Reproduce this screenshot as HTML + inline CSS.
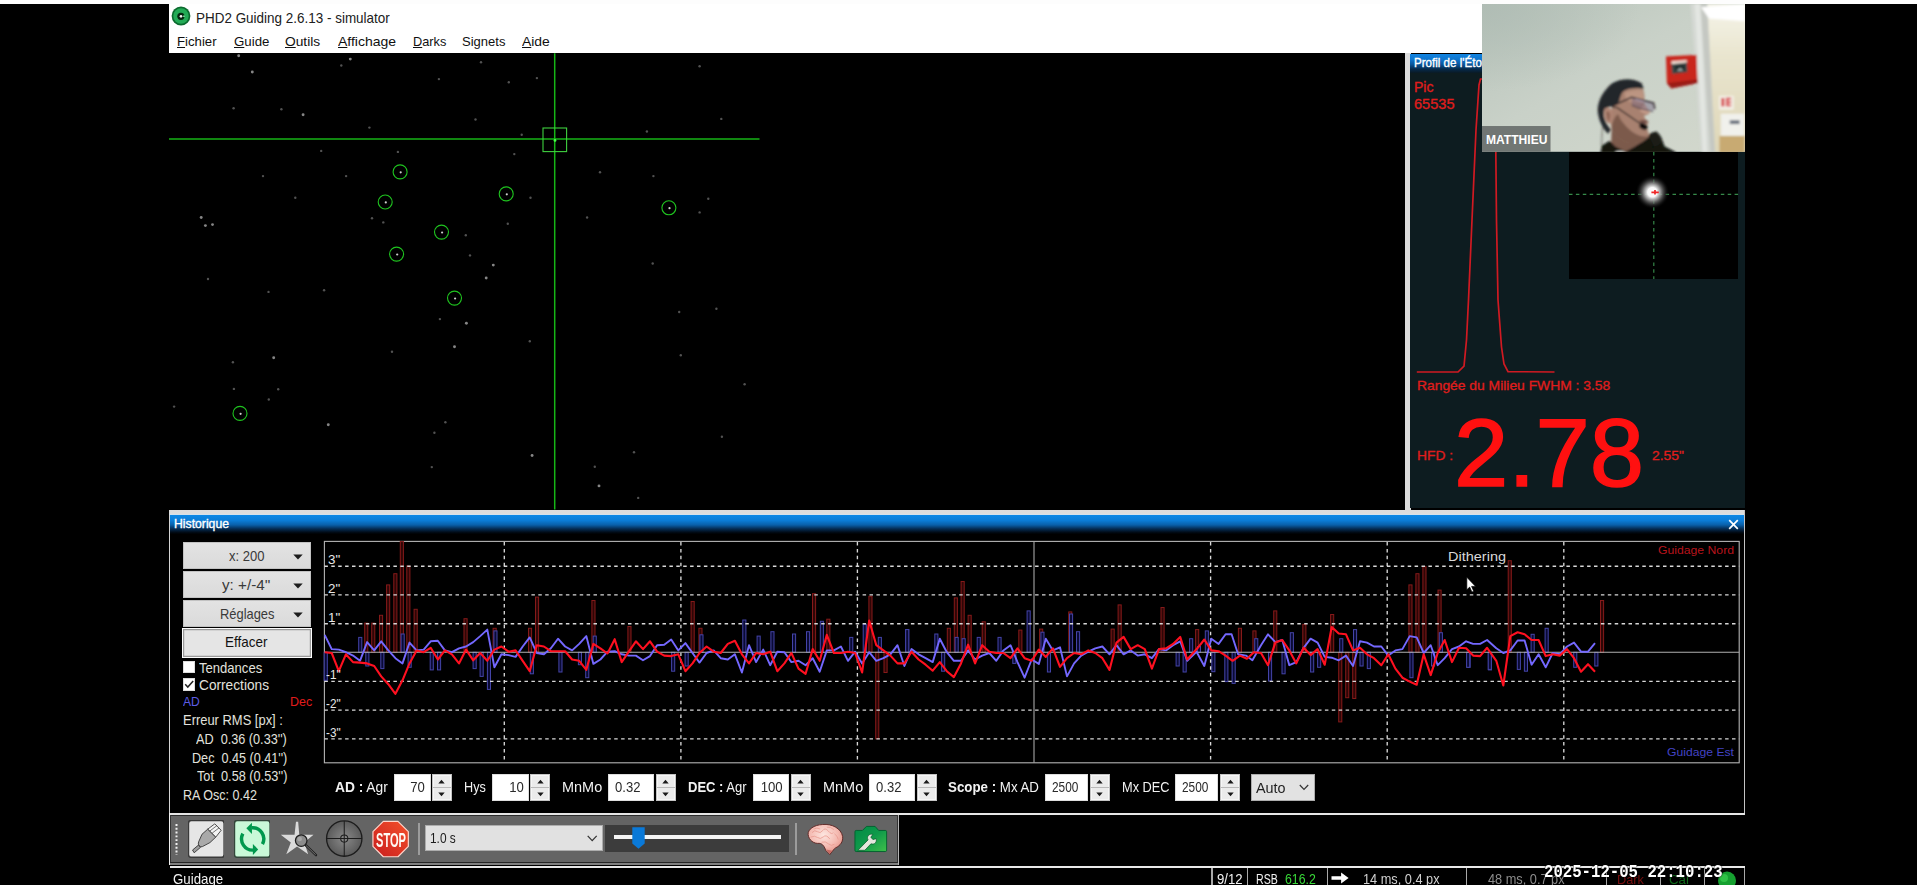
<!DOCTYPE html>
<html lang="fr"><head><meta charset="utf-8"><title>PHD2 Guiding 2.6.13 - simulator</title>
<style>
html,body{margin:0;padding:0;background:#000;}
html{width:1917px;height:885px;overflow:hidden;}
body{width:1917px;height:885px;position:relative;overflow:hidden;font-family:"Liberation Sans",sans-serif;}
body div,body svg{position:absolute;}
.t{position:absolute;white-space:pre;line-height:1;transform-origin:0 50%;display:block;}
</style></head>
<body>
<div style="left:0;top:0;width:1917px;height:885px;overflow:hidden;background:#000">
<!-- window title + menu -->
<div style="left:0.00px;top:0.00px;width:1917.00px;height:4.00px;background:#fdfdfd;"></div>
<div style="left:169.00px;top:3.60px;width:1576.00px;height:49.60px;background:#ffffff;"></div>
<svg style="left:170.5px;top:6.4px" width="20" height="20" viewBox="0 0 20 20"><circle cx="10" cy="10" r="9.4" fill="#0b6a2e"/><circle cx="10" cy="10" r="7.7" fill="#23ab56"/><circle cx="9.9" cy="10.3" r="3.6" fill="#04260f"/><circle cx="10" cy="10.3" r="1.35" fill="#f6f6f6"/><rect x="12" y="9.5" width="2" height="1.5" fill="#5fd088"/></svg>
<span class="t" style="left:196.00px;top:9.90px;font-size:15.00px;color:#202020;transform:scaleX(0.8975);">PHD2 Guiding 2.6.13 - simulator</span>
<span class="t" style="left:177.30px;top:34.89px;font-size:13.60px;color:#101010;transform:scaleX(0.9707);"><u>F</u>ichier</span>
<span class="t" style="left:233.80px;top:34.89px;font-size:13.60px;color:#101010;transform:scaleX(0.9757);"><u>G</u>uide</span>
<span class="t" style="left:285.40px;top:34.89px;font-size:13.60px;color:#101010;transform:scaleX(1.0125);"><u>O</u>utils</span>
<span class="t" style="left:337.50px;top:34.89px;font-size:13.60px;color:#101010;transform:scaleX(1.0292);"><u>A</u>ffichage</span>
<span class="t" style="left:412.50px;top:34.89px;font-size:13.60px;color:#101010;transform:scaleX(0.9376);"><u>D</u>arks</span>
<span class="t" style="left:462.40px;top:34.89px;font-size:13.60px;color:#101010;transform:scaleX(0.9571);">Signets</span>
<span class="t" style="left:522.00px;top:34.89px;font-size:13.60px;color:#101010;transform:scaleX(1.0214);"><u>A</u>ide</span>
<!-- guide camera star field -->
<div style="left:169.00px;top:53.20px;width:1235.50px;height:456.40px;background:#000;"></div>
<svg style="left:0;top:0" width="1917" height="885" viewBox="0 0 1917 885"><g fill="#9a9a9a"><circle cx="238.7" cy="55.8" r="1.45" fill="#a8a8a8" opacity=".8"/><circle cx="252.3" cy="72.0" r="1.45" fill="#a8a8a8" opacity=".8"/><circle cx="341.3" cy="65.5" r="1.2" fill="#6e6e6e" opacity=".75"/><circle cx="350.3" cy="59.1" r="1.45" fill="#a8a8a8" opacity=".8"/><circle cx="481.0" cy="62.3" r="1.2" fill="#6e6e6e" opacity=".75"/><circle cx="438.9" cy="79.1" r="1.2" fill="#6e6e6e" opacity=".75"/><circle cx="508.8" cy="82.3" r="1.2" fill="#6e6e6e" opacity=".75"/><circle cx="536.9" cy="78.1" r="1.2" fill="#6e6e6e" opacity=".75"/><circle cx="699.6" cy="66.2" r="1.2" fill="#6e6e6e" opacity=".75"/><circle cx="233.6" cy="108.2" r="1.2" fill="#6e6e6e" opacity=".75"/><circle cx="281.4" cy="109.2" r="1.2" fill="#6e6e6e" opacity=".75"/><circle cx="303.1" cy="114.7" r="1.45" fill="#a8a8a8" opacity=".8"/><circle cx="369.4" cy="127.6" r="1.2" fill="#6e6e6e" opacity=".75"/><circle cx="475.5" cy="119.5" r="1.2" fill="#6e6e6e" opacity=".75"/><circle cx="521.7" cy="134.7" r="1.2" fill="#6e6e6e" opacity=".75"/><circle cx="646.9" cy="131.5" r="1.2" fill="#6e6e6e" opacity=".75"/><circle cx="721.3" cy="118.9" r="1.2" fill="#6e6e6e" opacity=".75"/><circle cx="321.2" cy="150.9" r="1.2" fill="#6e6e6e" opacity=".75"/><circle cx="397.9" cy="151.9" r="1.2" fill="#6e6e6e" opacity=".75"/><circle cx="514.3" cy="154.1" r="1.2" fill="#6e6e6e" opacity=".75"/><circle cx="263.0" cy="176.1" r="1.2" fill="#6e6e6e" opacity=".75"/><circle cx="346.1" cy="176.1" r="1.2" fill="#6e6e6e" opacity=".75"/><circle cx="600.0" cy="172.3" r="1.2" fill="#6e6e6e" opacity=".75"/><circle cx="653.4" cy="176.1" r="1.2" fill="#6e6e6e" opacity=".75"/><circle cx="295.3" cy="197.8" r="1.2" fill="#6e6e6e" opacity=".75"/><circle cx="530.5" cy="197.8" r="1.2" fill="#6e6e6e" opacity=".75"/><circle cx="708.3" cy="198.8" r="1.2" fill="#6e6e6e" opacity=".75"/><circle cx="201.2" cy="217.5" r="1.45" fill="#a8a8a8" opacity=".8"/><circle cx="205.4" cy="225.6" r="1.45" fill="#a8a8a8" opacity=".8"/><circle cx="212.5" cy="224.6" r="1.45" fill="#a8a8a8" opacity=".8"/><circle cx="372.0" cy="218.2" r="1.2" fill="#6e6e6e" opacity=".75"/><circle cx="383.3" cy="222.4" r="1.2" fill="#6e6e6e" opacity=".75"/><circle cx="587.1" cy="217.5" r="1.2" fill="#6e6e6e" opacity=".75"/><circle cx="699.6" cy="212.4" r="1.2" fill="#6e6e6e" opacity=".75"/><circle cx="507.8" cy="223.7" r="1.2" fill="#6e6e6e" opacity=".75"/><circle cx="465.8" cy="235.3" r="1.2" fill="#6e6e6e" opacity=".75"/><circle cx="470.0" cy="255.4" r="1.2" fill="#6e6e6e" opacity=".75"/><circle cx="493.3" cy="265.1" r="1.45" fill="#a8a8a8" opacity=".8"/><circle cx="486.2" cy="278.0" r="1.45" fill="#a8a8a8" opacity=".8"/><circle cx="652.7" cy="263.5" r="1.2" fill="#6e6e6e" opacity=".75"/><circle cx="208.0" cy="279.0" r="1.2" fill="#6e6e6e" opacity=".75"/><circle cx="268.5" cy="291.9" r="1.2" fill="#6e6e6e" opacity=".75"/><circle cx="324.1" cy="290.3" r="1.2" fill="#6e6e6e" opacity=".75"/><circle cx="439.9" cy="319.1" r="1.2" fill="#6e6e6e" opacity=".75"/><circle cx="466.4" cy="323.3" r="1.45" fill="#a8a8a8" opacity=".8"/><circle cx="679.2" cy="312.0" r="1.2" fill="#6e6e6e" opacity=".75"/><circle cx="716.4" cy="308.7" r="1.2" fill="#6e6e6e" opacity=".75"/><circle cx="232.9" cy="362.3" r="1.2" fill="#6e6e6e" opacity=".75"/><circle cx="273.7" cy="357.8" r="1.45" fill="#a8a8a8" opacity=".8"/><circle cx="233.9" cy="388.9" r="1.2" fill="#6e6e6e" opacity=".75"/><circle cx="278.2" cy="389.2" r="1.2" fill="#6e6e6e" opacity=".75"/><circle cx="268.8" cy="399.5" r="1.2" fill="#6e6e6e" opacity=".75"/><circle cx="174.1" cy="406.6" r="1.2" fill="#6e6e6e" opacity=".75"/><circle cx="328.3" cy="424.8" r="1.45" fill="#a8a8a8" opacity=".8"/><circle cx="392.0" cy="351.7" r="1.2" fill="#6e6e6e" opacity=".75"/><circle cx="454.5" cy="346.8" r="1.45" fill="#a8a8a8" opacity=".8"/><circle cx="529.8" cy="341.3" r="1.2" fill="#6e6e6e" opacity=".75"/><circle cx="445.4" cy="422.2" r="1.2" fill="#6e6e6e" opacity=".75"/><circle cx="434.4" cy="432.8" r="1.2" fill="#6e6e6e" opacity=".75"/><circle cx="431.8" cy="467.1" r="1.2" fill="#6e6e6e" opacity=".75"/><circle cx="532.1" cy="455.5" r="1.45" fill="#a8a8a8" opacity=".8"/><circle cx="680.8" cy="355.2" r="1.2" fill="#6e6e6e" opacity=".75"/><circle cx="744.6" cy="384.3" r="1.2" fill="#6e6e6e" opacity=".75"/><circle cx="721.9" cy="436.7" r="1.2" fill="#6e6e6e" opacity=".75"/><circle cx="634.0" cy="452.3" r="1.2" fill="#6e6e6e" opacity=".75"/><circle cx="594.8" cy="466.8" r="1.2" fill="#6e6e6e" opacity=".75"/><circle cx="599.0" cy="485.9" r="1.45" fill="#a8a8a8" opacity=".8"/><circle cx="638.2" cy="497.9" r="1.2" fill="#6e6e6e" opacity=".75"/></g><g fill="none" stroke="#1fc41f" stroke-width="1.1"><circle cx="400.1" cy="171.9" r="7"/><circle cx="400.7" cy="172.3" r="1.1" fill="#cfcfcf" stroke="none"/><circle cx="385.2" cy="202.0" r="7"/><circle cx="385.8" cy="202.4" r="1.1" fill="#cfcfcf" stroke="none"/><circle cx="506.2" cy="193.9" r="7"/><circle cx="506.8" cy="194.3" r="1.1" fill="#cfcfcf" stroke="none"/><circle cx="441.5" cy="232.1" r="7"/><circle cx="442.1" cy="232.5" r="1.1" fill="#cfcfcf" stroke="none"/><circle cx="396.6" cy="254.1" r="7"/><circle cx="397.2" cy="254.5" r="1.1" fill="#cfcfcf" stroke="none"/><circle cx="454.5" cy="298.1" r="7"/><circle cx="455.1" cy="298.5" r="1.1" fill="#cfcfcf" stroke="none"/><circle cx="668.9" cy="207.8" r="7"/><circle cx="669.5" cy="208.2" r="1.1" fill="#cfcfcf" stroke="none"/><circle cx="240.0" cy="413.4" r="7"/><circle cx="240.6" cy="413.8" r="1.1" fill="#cfcfcf" stroke="none"/></g><g stroke="#16b516" stroke-width="1.5" fill="none"><line x1="554.7" y1="53.2" x2="554.7" y2="509.6"/><line x1="169" y1="139" x2="759.5" y2="139"/></g><rect x="543" y="128" width="23.6" height="23.6" fill="none" stroke="#3fd03f" stroke-width="1.1"/><circle cx="555" cy="140.4" r="1.4" fill="#48ff48"/></svg>
<div style="left:1404.50px;top:53.20px;width:6.00px;height:457.00px;background:#dcdcdc;"></div>
<div style="left:169.00px;top:509.60px;width:1576.20px;height:5.40px;background:linear-gradient(#dcdcdc 0,#dddddd 70%,#cfe3f2 100%);"></div>
<!-- star profile panel -->
<div style="left:1410.40px;top:53.70px;width:334.80px;height:454.70px;background:#0d1c20;"></div>
<div style="left:1410.40px;top:53.70px;width:334.80px;height:19.50px;background:linear-gradient(#1184e2 0,#0e74cc 30%,#0a559a 55%,#06294a 80%,#0a1a24 100%);"></div>
<span class="t" style="left:1414.20px;top:56.97px;font-size:12.20px;color:#ffffff;transform:scaleX(0.9495);-webkit-text-stroke:.35px #fff;">Profil de l&#39;Étoile</span>
<span class="t" style="left:1414.00px;top:79.98px;font-size:14.20px;color:#e01c1c;transform:scaleX(0.9889);-webkit-text-stroke:.3px #e01c1c;">Pic</span>
<span class="t" style="left:1414.00px;top:97.18px;font-size:14.20px;color:#e01c1c;transform:scaleX(1.0265);-webkit-text-stroke:.3px #e01c1c;">65535</span>
<svg style="left:0;top:0" width="1917" height="885" viewBox="0 0 1917 885"><polyline fill="none" stroke="#d01a22" stroke-width="1.7" points="1416.8,372 1458,372 1464,366 1466.5,340 1468.5,300 1472,220 1476,130 1479,85 1480.5,79 1494,79 1495.5,120 1496.5,220 1498,300 1501.5,347 1504,364 1508,371.6 1554.5,372"/></svg>
<span class="t" style="left:1416.60px;top:379.46px;font-size:13.40px;color:#e01c1c;transform:scaleX(1.0342);-webkit-text-stroke:.3px #e01c1c;">Rangée du Milieu FWHM : 3.58</span>
<span class="t" style="left:1416.60px;top:449.26px;font-size:13.40px;color:#e01c1c;transform:scaleX(1.0295);-webkit-text-stroke:.3px #e01c1c;">HFD :</span>
<span class="t" style="left:1453.50px;top:404.51px;font-size:96.50px;color:#ff1010;transform:scaleX(1.0116);-webkit-text-stroke:1.5px #ff1010;">2.78</span>
<span class="t" style="left:1652.40px;top:449.26px;font-size:13.40px;color:#e01c1c;transform:scaleX(1.0380);-webkit-text-stroke:.3px #e01c1c;">2.55&quot;</span>
<div style="left:1568.60px;top:151.60px;width:169.80px;height:127.00px;background:#000;"></div>
<svg style="left:1568.6px;top:151.6px" width="170" height="127" viewBox="0 0 170 127"><defs><radialGradient id="glow"><stop offset="0" stop-color="#fff"/><stop offset="0.28" stop-color="#f8f8f8"/><stop offset="0.5" stop-color="#9c9c9c" stop-opacity=".9"/><stop offset="0.75" stop-color="#444" stop-opacity=".55"/><stop offset="1" stop-color="#000" stop-opacity="0"/></radialGradient></defs><g stroke="#368a4a" stroke-width="1.15" stroke-dasharray="3.5 3.4"><line x1="0" y1="42.3" x2="170" y2="42.3"/><line x1="84.8" y1="0" x2="84.8" y2="127"/></g><circle cx="83.4" cy="40.2" r="17" fill="url(#glow)"/><path d="M82.4 40.3h7.4M86 38v4.6" stroke="#f02626" stroke-width="1.7"/></svg>
<!-- presenter webcam thumbnail -->
<svg style="left:1482.4px;top:3.8px" width="262.8" height="147.8" viewBox="15 22 1500 843" preserveAspectRatio="none"><defs><linearGradient id="wall" x1="0" y1="0" x2="1" y2="1"><stop offset="0" stop-color="#b7c3ba"/><stop offset="0.45" stop-color="#c9d1c8"/><stop offset="1" stop-color="#d3d8cd"/></linearGradient><linearGradient id="cream" x1="0" y1="0" x2="0" y2="1"><stop offset="0" stop-color="#f6f5ea"/><stop offset="0.35" stop-color="#e9e5cf"/><stop offset="1" stop-color="#dfd7b8"/></linearGradient><linearGradient id="skin" x1="0" y1="0" x2="1" y2="0"><stop offset="0" stop-color="#8e6c5c"/><stop offset="0.5" stop-color="#b18b77"/><stop offset="1" stop-color="#bf9a86"/></linearGradient><radialGradient id="tl" cx="0" cy="0" r="1"><stop offset="0" stop-color="#aebbb3" stop-opacity=".8"/><stop offset="1" stop-color="#aebbb3" stop-opacity="0"/></radialGradient><filter id="bl" x="-5%" y="-5%" width="110%" height="110%"><feGaussianBlur stdDeviation="6.5"/></filter><filter id="bl2" x="-5%" y="-5%" width="110%" height="110%"><feGaussianBlur stdDeviation="9"/></filter></defs><rect x="15" y="22" width="1500" height="843" fill="url(#wall)"/><rect x="15" y="22" width="900" height="500" fill="url(#tl)"/><g filter="url(#bl)"><rect x="1300" y="22" width="230" height="843" fill="url(#cream)"/><path d="M1205 22 L1300 22 L1345 865 L1265 865 Z" fill="#d4d8d3"/><path d="M1228 22 L1262 22 L1300 865 L1275 865 Z" fill="#e3e6e2"/><path d="M1262 22 L1300 22 L1345 865 L1318 865 Z" fill="#c5c8c2"/><path d="M1265 40 L1515 22 L1515 120 L1310 105 Z" fill="#ffffff"/><rect x="1370" y="775" width="145" height="95" fill="#c8aa72"/><rect x="1378" y="648" width="135" height="125" fill="#f1f1ec"/><rect x="1430" y="685" width="55" height="22" fill="#6d7480"/><rect x="1368" y="545" width="84" height="80" fill="#f3efe6"/><rect x="1382" y="558" width="14" height="48" fill="#d2202a"/><rect x="1408" y="556" width="28" height="50" fill="#d2202a" opacity=".8"/><rect x="1420" y="568" width="18" height="8" fill="#f3efe6"/><rect x="1420" y="588" width="18" height="8" fill="#f3efe6"/><g transform="translate(571.1 342.7) scale(0.613)"><path d="M806 -36L1090 -50 1100 212 856 262 814 214z" fill="#c9271f"/><path d="M814 214L1100 178 1100 212 856 262z" fill="#9a1a16"/><path d="M856 24L1000 14 1006 110 862 126z" fill="#3d4a49"/><path d="M886 52L980 44 984 100 890 108z" fill="#1f2a2a"/><path d="M900 100l40-30 30 26z" fill="#cfd8d8" opacity=".75"/><path d="M856 8L1000 -2 1000 22 856 38z" fill="#efd9cf"/><path d="M300 640L290 860 620 860 640 700z" fill="#7c5a4c"/><path d="M196 864L208 796 280 750 332 802 430 852 522 800 600 752 660 682 716 660 762 720 792 800 892 852 892 864z" fill="#12140f"/><path d="M640 700C680 660 730 650 760 720 780 770 740 800 690 800z" fill="#1b1d18"/><path d="M336 850C370 838 410 842 436 860L330 862z" fill="#d8d8d4"/><path d="M372 300C430 262 520 250 592 266 612 330 604 372 602 400 622 440 648 470 656 486 650 504 622 512 602 512 606 540 618 556 640 566 646 590 630 600 624 616 634 650 650 680 648 704 630 740 560 770 470 770 400 760 330 700 300 640 270 560 300 380 372 300z" fill="#a8816f"/><path d="M420 300C470 280 540 270 590 280 600 330 596 370 590 400 560 420 480 400 430 360z" fill="#c09a87" opacity=".8"/><path d="M300 640C330 700 400 760 470 770 560 770 630 740 648 704 600 720 520 700 460 640 420 600 380 560 360 500 330 520 300 580 300 640z" fill="#6f5043" opacity=".8"/><path d="M560 470C600 500 640 500 654 488 640 470 620 440 604 410z" fill="#c9a08e"/><path d="M560 560C590 552 620 556 640 568 630 584 600 588 566 580z" fill="#6e4a44"/><path d="M266 684C220 640 176 560 170 470 168 380 214 292 300 216 380 168 500 160 580 214L598 268C540 250 450 258 404 290 380 320 372 372 368 384 350 410 330 424 300 428 260 432 232 452 226 480 216 530 250 600 292 644z" fill="#24262a"/><path d="M232 452C260 430 300 440 306 480 312 540 300 580 280 590 250 590 214 520 232 452z" fill="#b08574"/><path d="M250 480C270 470 286 490 284 520 282 550 274 566 264 566z" fill="#8a6252"/><path d="M486 344L688 398 700 452 684 476 560 450 486 420z" fill="#6c5c7c" fill-opacity=".42"/><path d="M300 430L486 344 690 398 702 452" fill="none" stroke="#2e2628" stroke-width="13" stroke-linejoin="round"/><path d="M486 420L560 450 684 478" fill="none" stroke="#4a3c44" stroke-width="8"/><path d="M520 360L600 384" stroke="#c8c0e0" stroke-width="14" opacity=".55"/><path d="M300 436L350 440 584 602" fill="none" stroke="#1c1a1c" stroke-width="10"/><ellipse cx="596" cy="616" rx="40" ry="27" transform="rotate(28 596 616)" fill="#0c0c0d"/><path d="M216 620C206 680 210 740 206 796" fill="none" stroke="#3c3836" stroke-width="6"/></g></g><rect x="15" y="718" width="391" height="147" fill="#6d7270" fill-opacity=".96"/></svg>
<span class="t" style="left:1486.20px;top:133.20px;font-size:13.00px;color:#ffffff;font-weight:700;transform:scaleX(0.9274);">MATTHIEU</span>
<!-- history graph panel -->
<div style="left:169.00px;top:515.00px;width:1576.20px;height:299.90px;background:#000;"></div>
<div style="left:169.00px;top:515.00px;width:1576.20px;height:21.50px;background:linear-gradient(#0c88e6 0,#0b7cd6 25%,#0960aa 45%,#052f58 62%,#010c18 78%,#000 87%);"></div>
<div style="left:169.00px;top:515.00px;width:1.30px;height:299.90px;background:#d4d4d4;"></div>
<div style="left:1743.90px;top:509.60px;width:1.30px;height:305.30px;background:#c4c4c4;"></div>
<div style="left:169.00px;top:812.90px;width:1576.20px;height:2.00px;background:#e6e6e6;"></div>
<span class="t" style="left:173.80px;top:517.97px;font-size:12.20px;color:#ffffff;transform:scaleX(1.0023);-webkit-text-stroke:.35px #fff;">Historique</span>
<svg style="left:1727.5px;top:518.5px" width="11" height="11" viewBox="0 0 11 11"><path d="M1.2 1.2l8.6 8.6M9.8 1.2l-8.6 8.6" stroke="#fff" stroke-width="1.7"/></svg>
<div style="left:182.60px;top:542.40px;width:128.80px;height:26.60px;background:linear-gradient(#e3e3e3,#dadada);box-shadow:inset 0 0 0 1px #c2c2c2;"></div>
<span class="t" style="left:228.50px;top:548.98px;font-size:14.20px;color:#3a3a3a;transform:scaleX(0.9184);">x: 200</span>
<svg style="left:293px;top:554.1px" width="10" height="6" viewBox="0 0 10 6"><path d="M0.3 0.4h9.4L5 5.6z" fill="#1c1c1c"/></svg>
<div style="left:182.60px;top:571.20px;width:128.80px;height:26.60px;background:linear-gradient(#e3e3e3,#dadada);box-shadow:inset 0 0 0 1px #c2c2c2;"></div>
<span class="t" style="left:221.50px;top:577.78px;font-size:14.20px;color:#3a3a3a;transform:scaleX(1.0718);">y: +/-4&#39;&#39;</span>
<svg style="left:293px;top:582.9px" width="10" height="6" viewBox="0 0 10 6"><path d="M0.3 0.4h9.4L5 5.6z" fill="#1c1c1c"/></svg>
<div style="left:182.60px;top:600.00px;width:128.80px;height:26.60px;background:linear-gradient(#e3e3e3,#dadada);box-shadow:inset 0 0 0 1px #c2c2c2;"></div>
<span class="t" style="left:220.00px;top:606.58px;font-size:14.20px;color:#3a3a3a;transform:scaleX(0.9090);">Réglages</span>
<svg style="left:293px;top:611.7px" width="10" height="6" viewBox="0 0 10 6"><path d="M0.3 0.4h9.4L5 5.6z" fill="#1c1c1c"/></svg>
<div style="left:181.60px;top:627.60px;width:130.60px;height:30.20px;background:#e5e5e5;box-shadow:inset 0 0 0 1px #fdfdfd, inset 0 0 0 2.2px #9a9a9a;"></div>
<span class="t" style="left:225.40px;top:635.24px;font-size:14.60px;color:#111;transform:scaleX(0.9221);">Effacer</span>
<div style="left:182.60px;top:660.80px;width:12.40px;height:12.40px;background:#fff;box-shadow:inset 0 0 0 1px #dcdcdc;"></div>
<div style="left:182.60px;top:678.20px;width:12.40px;height:12.40px;background:#fff;box-shadow:inset 0 0 0 1px #dcdcdc;"></div>
<svg style="left:182.6px;top:678.2px" width="12.4" height="12.4" viewBox="0 0 12.4 12.4"><path d="M2.2 6.3l2.6 2.8 5.4-6.2" fill="none" stroke="#222" stroke-width="1.5"/></svg>
<span class="t" style="left:199.40px;top:660.58px;font-size:14.20px;color:#e2e2de;transform:scaleX(0.9209);">Tendances</span>
<span class="t" style="left:199.40px;top:678.18px;font-size:14.20px;color:#e2e2de;transform:scaleX(0.9649);">Corrections</span>
<span class="t" style="left:182.60px;top:695.09px;font-size:13.60px;color:#5c5ce6;transform:scaleX(0.8893);">AD</span>
<span class="t" style="left:289.70px;top:695.09px;font-size:13.60px;color:#e01c1c;transform:scaleX(0.9178);">Dec</span>
<span class="t" style="left:182.60px;top:713.38px;font-size:14.20px;color:#e2e2de;transform:scaleX(0.9115);">Erreur RMS [px] :</span>
<span class="t" style="left:196.20px;top:732.18px;font-size:14.20px;color:#e2e2de;transform:scaleX(0.8933);">AD  0.36 (0.33&#39;&#39;)</span>
<span class="t" style="left:191.70px;top:750.58px;font-size:14.20px;color:#e2e2de;transform:scaleX(0.8894);">Dec  0.45 (0.41&#39;&#39;)</span>
<span class="t" style="left:196.60px;top:768.98px;font-size:14.20px;color:#e2e2de;transform:scaleX(0.8964);">Tot  0.58 (0.53&#39;&#39;)</span>
<span class="t" style="left:182.60px;top:787.58px;font-size:14.20px;color:#e2e2de;transform:scaleX(0.8840);">RA Osc: 0.42</span>
<svg style="left:0;top:0" width="1917" height="885" viewBox="0 0 1917 885"><rect x="324.4" y="541.4" width="1414.8" height="221.4" fill="#000" stroke="#b4b4b4" stroke-width="1.1"/><g fill="#2e0606" stroke="#861a1a" stroke-width="1"><rect x="364.7" y="623.1" width="3.1" height="29.2"/><rect x="371.7" y="623.1" width="3.1" height="29.2"/><rect x="379.5" y="615.3" width="3.1" height="37.0"/><rect x="386.6" y="584.9" width="3.1" height="67.4"/><rect x="393.8" y="573.7" width="3.1" height="78.6"/><rect x="400.3" y="541.6" width="3.1" height="110.7"/><rect x="406.8" y="565.9" width="3.1" height="86.4"/><rect x="414.1" y="609.3" width="3.1" height="43.0"/><rect x="464.0" y="618.7" width="3.1" height="33.6"/><rect x="493.1" y="628.3" width="3.1" height="24.0"/><rect x="528.5" y="628.3" width="3.1" height="24.0"/><rect x="535.5" y="597.1" width="3.1" height="55.2"/><rect x="591.9" y="600.5" width="3.1" height="51.8"/><rect x="627.9" y="626.5" width="3.1" height="25.8"/><rect x="691.1" y="601.5" width="3.1" height="50.8"/><rect x="698.9" y="628.3" width="3.1" height="24.0"/><rect x="812.5" y="593.7" width="3.1" height="58.6"/><rect x="826.8" y="619.2" width="3.1" height="33.1"/><rect x="868.9" y="596.3" width="3.1" height="56.0"/><rect x="875.7" y="652.3" width="3.1" height="86.5"/><rect x="884.0" y="652.3" width="3.1" height="20.2"/><rect x="947.3" y="628.3" width="3.1" height="24.0"/><rect x="954.3" y="597.9" width="3.1" height="54.4"/><rect x="961.1" y="581.5" width="3.1" height="70.8"/><rect x="968.1" y="615.3" width="3.1" height="37.0"/><rect x="982.2" y="621.8" width="3.1" height="30.5"/><rect x="1018.8" y="630.1" width="3.1" height="22.2"/><rect x="1039.6" y="629.1" width="3.1" height="23.2"/><rect x="1068.7" y="611.9" width="3.1" height="40.4"/><rect x="1111.1" y="629.1" width="3.1" height="23.2"/><rect x="1118.1" y="604.9" width="3.1" height="47.4"/><rect x="1161.0" y="607.5" width="3.1" height="44.8"/><rect x="1195.6" y="629.6" width="3.1" height="22.7"/><rect x="1238.4" y="628.3" width="3.1" height="24.0"/><rect x="1252.9" y="630.9" width="3.1" height="21.4"/><rect x="1273.7" y="610.9" width="3.1" height="41.4"/><rect x="1302.8" y="624.4" width="3.1" height="27.9"/><rect x="1330.6" y="614.5" width="3.1" height="37.8"/><rect x="1338.7" y="652.3" width="3.1" height="69.6"/><rect x="1345.7" y="652.3" width="3.1" height="45.4"/><rect x="1352.7" y="652.3" width="3.1" height="46.2"/><rect x="1408.9" y="584.9" width="3.1" height="67.4"/><rect x="1415.9" y="573.7" width="3.1" height="78.6"/><rect x="1422.9" y="566.7" width="3.1" height="85.6"/><rect x="1438.0" y="590.1" width="3.1" height="62.2"/><rect x="1508.2" y="560.7" width="3.1" height="91.6"/><rect x="1600.5" y="600.5" width="3.1" height="51.8"/></g><g fill="#0a0a34" stroke="#4444a8" stroke-width="1"><rect x="324.2" y="652.3" width="3.1" height="28.0"/><rect x="358.7" y="637.4" width="3.1" height="14.9"/><rect x="365.8" y="652.3" width="3.1" height="13.7"/><rect x="380.8" y="652.3" width="3.1" height="16.3"/><rect x="401.1" y="634.0" width="3.1" height="18.3"/><rect x="408.1" y="652.3" width="3.1" height="15.0"/><rect x="430.2" y="652.3" width="3.1" height="17.6"/><rect x="437.5" y="652.3" width="3.1" height="17.6"/><rect x="473.1" y="652.3" width="3.1" height="16.3"/><rect x="480.1" y="652.3" width="3.1" height="24.1"/><rect x="487.4" y="652.3" width="3.1" height="37.1"/><rect x="493.9" y="630.9" width="3.1" height="21.4"/><rect x="530.3" y="652.3" width="3.1" height="21.5"/><rect x="558.9" y="652.3" width="3.1" height="19.7"/><rect x="578.4" y="652.3" width="3.1" height="12.4"/><rect x="585.7" y="652.3" width="3.1" height="25.4"/><rect x="593.2" y="636.1" width="3.1" height="16.2"/><rect x="671.6" y="652.3" width="3.1" height="18.9"/><rect x="685.1" y="652.3" width="3.1" height="13.7"/><rect x="699.9" y="634.8" width="3.1" height="17.5"/><rect x="742.8" y="620.0" width="3.1" height="32.3"/><rect x="757.1" y="636.1" width="3.1" height="16.2"/><rect x="770.9" y="631.7" width="3.1" height="20.6"/><rect x="792.5" y="634.0" width="3.1" height="18.3"/><rect x="806.5" y="631.7" width="3.1" height="20.6"/><rect x="820.3" y="621.3" width="3.1" height="31.0"/><rect x="849.7" y="637.4" width="3.1" height="14.9"/><rect x="863.2" y="624.4" width="3.1" height="27.9"/><rect x="878.3" y="637.4" width="3.1" height="14.9"/><rect x="905.6" y="629.6" width="3.1" height="22.7"/><rect x="905.7" y="629.6" width="3.1" height="22.7"/><rect x="934.8" y="634.0" width="3.1" height="18.3"/><rect x="941.6" y="652.3" width="3.1" height="18.9"/><rect x="955.1" y="637.4" width="3.1" height="14.9"/><rect x="962.1" y="638.7" width="3.1" height="13.6"/><rect x="977.2" y="637.4" width="3.1" height="14.9"/><rect x="998.0" y="637.4" width="3.1" height="14.9"/><rect x="1012.8" y="652.3" width="3.1" height="11.1"/><rect x="1027.1" y="610.9" width="3.1" height="41.4"/><rect x="1040.9" y="632.2" width="3.1" height="20.1"/><rect x="1047.4" y="652.3" width="3.1" height="19.7"/><rect x="1069.5" y="614.0" width="3.1" height="38.3"/><rect x="1076.5" y="631.7" width="3.1" height="20.6"/><rect x="1176.1" y="652.3" width="3.1" height="13.7"/><rect x="1183.1" y="652.3" width="3.1" height="19.7"/><rect x="1189.6" y="638.7" width="3.1" height="13.6"/><rect x="1197.4" y="646.5" width="3.1" height="5.8"/><rect x="1205.3" y="630.9" width="3.1" height="21.4"/><rect x="1211.8" y="652.3" width="3.1" height="19.4"/><rect x="1224.8" y="652.3" width="3.1" height="29.3"/><rect x="1232.1" y="652.3" width="3.1" height="31.1"/><rect x="1254.7" y="638.7" width="3.1" height="13.6"/><rect x="1268.5" y="652.3" width="3.1" height="28.7"/><rect x="1282.0" y="652.3" width="3.1" height="21.5"/><rect x="1290.3" y="632.7" width="3.1" height="19.6"/><rect x="1310.6" y="652.3" width="3.1" height="19.7"/><rect x="1317.6" y="652.3" width="3.1" height="15.0"/><rect x="1339.7" y="638.7" width="3.1" height="13.6"/><rect x="1353.5" y="629.6" width="3.1" height="22.7"/><rect x="1360.0" y="652.3" width="3.1" height="13.7"/><rect x="1367.3" y="652.3" width="3.1" height="16.3"/><rect x="1409.9" y="652.3" width="3.1" height="25.4"/><rect x="1431.5" y="652.3" width="3.1" height="13.7"/><rect x="1439.3" y="632.7" width="3.1" height="19.6"/><rect x="1467.1" y="652.3" width="3.1" height="15.0"/><rect x="1488.4" y="652.3" width="3.1" height="17.6"/><rect x="1466.6" y="652.3" width="3.1" height="15.0"/><rect x="1488.2" y="652.3" width="3.1" height="17.1"/><rect x="1517.3" y="652.3" width="3.1" height="17.1"/><rect x="1524.4" y="652.3" width="3.1" height="18.9"/><rect x="1531.1" y="634.3" width="3.1" height="18.0"/><rect x="1545.1" y="628.3" width="3.1" height="24.0"/><rect x="1573.7" y="652.3" width="3.1" height="15.0"/><rect x="1594.8" y="652.3" width="3.1" height="13.7"/></g><g stroke="#d8d8d8" stroke-width="1.35" stroke-dasharray="3.5 3.4" fill="none"><line x1="324.4" y1="566.2" x2="1739.2" y2="566.2"/><line x1="324.4" y1="594.9" x2="1739.2" y2="594.9"/><line x1="324.4" y1="623.7" x2="1739.2" y2="623.7"/><line x1="324.4" y1="681.3" x2="1739.2" y2="681.3"/><line x1="324.4" y1="710.1" x2="1739.2" y2="710.1"/><line x1="324.4" y1="738.9" x2="1739.2" y2="738.9"/><line x1="504.3" y1="542.0" x2="504.3" y2="762.8"/><line x1="680.9" y1="542.0" x2="680.9" y2="762.8"/><line x1="857.4" y1="542.0" x2="857.4" y2="762.8"/><line x1="1210.6" y1="542.0" x2="1210.6" y2="762.8"/><line x1="1387.2" y1="542.0" x2="1387.2" y2="762.8"/><line x1="1563.8" y1="542.0" x2="1563.8" y2="762.8"/></g><line x1="1034" y1="541.4" x2="1034" y2="762.8" stroke="#a8a8a8" stroke-width="1.1"/><line x1="324.4" y1="652.3" x2="1739.2" y2="652.3" stroke="#b0b0b0" stroke-width="1.1"/><polyline fill="none" stroke="#7468ff" stroke-width="1.9" stroke-linejoin="round" points="324.7,634.8 331.7,649.1 338.8,649.6 345.9,652.2 353.0,655.6 360.0,660.8 367.1,642.1 374.2,650.4 381.2,641.3 388.3,650.4 395.4,658.2 402.5,663.4 409.5,642.6 416.6,650.4 423.7,649.6 430.7,641.3 437.8,640.8 444.9,650.4 451.9,652.2 459.0,648.3 466.1,646.5 473.2,642.1 480.2,636.1 487.3,629.6 494.4,667.3 501.4,654.3 508.5,655.1 515.6,656.9 522.7,646.5 529.7,637.4 536.8,653.0 543.9,654.3 550.9,648.3 558.0,638.7 565.1,646.5 572.1,650.4 579.2,643.9 586.3,636.1 593.4,663.9 600.4,659.5 607.5,651.7 614.7,651.2 621.7,654.3 628.8,655.6 635.9,655.6 643.0,660.3 650.0,656.1 657.1,645.2 664.2,644.7 671.2,639.5 678.3,650.4 685.4,643.1 692.5,653.0 699.5,662.6 706.6,653.0 713.7,650.4 720.7,658.2 727.8,659.5 734.9,654.3 741.9,672.5 749.0,645.2 756.1,662.1 763.2,649.6 770.2,665.2 777.3,651.7 784.4,652.2 791.4,662.1 798.5,660.8 805.6,665.2 812.7,658.2 819.7,671.7 826.8,650.4 833.9,650.4 840.9,646.5 848.0,660.8 855.1,651.7 862.1,663.4 869.2,652.2 876.3,660.8 883.4,658.2 890.4,654.3 897.5,645.2 904.4,666.0 911.5,649.1 918.6,654.3 925.6,658.2 932.7,662.1 939.8,638.7 946.8,652.2 953.9,660.8 961.0,660.8 968.1,650.4 975.1,659.5 982.2,655.6 989.3,653.0 996.3,660.8 1003.4,650.4 1010.5,645.2 1017.5,662.1 1024.6,677.7 1031.7,659.5 1038.8,663.9 1045.8,638.7 1052.9,650.4 1060.0,647.3 1067.0,676.4 1074.1,663.4 1081.2,655.6 1088.3,651.7 1095.3,648.3 1102.4,646.5 1109.5,654.3 1116.5,645.2 1123.6,654.3 1130.7,650.4 1137.7,655.6 1144.8,654.3 1151.9,658.2 1159.0,649.1 1166.0,650.4 1173.1,645.2 1180.2,641.3 1187.2,660.8 1196.5,651.7 1204.3,666.0 1211.3,638.7 1218.6,643.9 1225.6,634.3 1231.6,634.3 1238.1,654.3 1245.9,655.6 1252.4,660.3 1261.0,645.2 1268.0,634.3 1275.3,642.1 1282.3,640.0 1289.3,665.2 1296.3,662.1 1303.6,647.8 1310.6,638.7 1317.6,642.6 1324.7,656.9 1331.7,657.7 1338.7,660.3 1346.0,655.6 1353.0,666.0 1360.0,641.3 1367.0,642.6 1374.0,646.5 1381.3,646.5 1388.3,655.6 1395.4,650.4 1402.4,649.1 1409.7,636.1 1416.7,637.4 1423.7,653.0 1430.7,645.2 1437.7,665.2 1444.7,658.2 1452.0,649.1 1459.0,646.5 1466.1,641.3 1473.1,643.9 1480.1,643.9 1487.1,640.0 1496.3,648.3 1503.3,653.0 1510.3,650.4 1517.6,640.5 1524.6,640.5 1531.6,664.7 1538.6,654.3 1545.7,667.3 1552.7,653.0 1559.7,654.3 1567.0,646.5 1574.0,642.6 1581.0,651.7 1588.0,651.7 1595.0,643.1"/><polyline fill="none" stroke="#ff1020" stroke-width="2.1" stroke-linejoin="round" points="324.7,652.2 331.7,653.0 338.8,671.2 345.9,654.3 353.0,662.1 360.0,662.6 367.1,663.4 374.2,666.0 381.2,676.4 388.3,684.2 395.4,693.8 402.5,680.3 409.5,663.4 416.6,650.4 423.7,652.2 430.7,647.8 437.8,659.5 444.9,650.4 451.9,654.3 459.0,663.4 466.1,649.6 473.2,660.3 480.2,653.0 487.3,660.8 494.4,649.6 501.4,646.5 508.5,651.7 515.6,650.4 522.7,660.8 529.7,671.2 536.8,645.2 543.9,646.5 550.9,651.2 558.0,651.2 565.1,651.2 572.1,659.5 579.2,660.8 586.3,669.9 593.4,643.9 600.4,648.3 607.5,653.5 614.7,639.2 621.7,662.1 628.8,651.7 635.9,641.3 643.0,649.1 650.0,641.3 657.1,651.7 664.2,655.6 671.2,656.1 678.3,654.3 685.4,671.2 692.5,663.4 699.5,653.0 706.6,646.5 713.7,651.7 720.7,653.0 727.8,643.9 734.9,640.8 741.9,654.3 749.0,663.4 756.1,653.0 763.2,654.3 770.2,651.7 777.3,671.2 784.4,663.4 791.4,653.0 798.5,668.6 805.6,673.8 812.7,649.1 819.7,660.8 826.8,634.8 833.9,653.0 840.9,653.0 848.0,651.7 855.1,653.0 862.1,672.5 869.2,620.5 876.3,645.2 883.4,650.4 890.4,655.6 897.5,663.4 904.4,663.4 911.5,651.7 918.6,659.5 925.6,664.7 932.7,670.7 939.8,662.1 946.8,671.2 953.9,677.1 961.0,663.4 968.1,644.7 975.1,663.4 982.2,645.2 989.3,651.7 996.3,653.0 1003.4,653.0 1010.5,658.2 1017.5,648.3 1024.6,658.2 1031.7,660.8 1038.8,649.6 1045.8,656.9 1052.9,648.3 1060.0,666.8 1067.0,658.2 1074.1,653.0 1081.2,654.3 1088.3,650.4 1095.3,653.0 1102.4,658.2 1109.5,669.9 1116.5,642.6 1123.6,636.9 1130.7,649.1 1137.7,645.2 1144.8,649.1 1151.9,668.6 1159.0,649.1 1166.0,648.3 1173.1,643.9 1180.2,636.9 1187.2,659.5 1197.8,647.8 1204.3,639.5 1211.3,650.4 1218.6,651.2 1225.6,655.6 1232.6,660.8 1239.9,655.6 1246.9,658.7 1253.9,652.2 1261.0,653.0 1268.0,665.2 1275.3,642.6 1282.3,640.0 1289.3,650.4 1296.3,663.4 1303.6,647.8 1310.6,655.1 1317.6,649.1 1324.7,664.7 1331.7,627.0 1338.7,633.5 1346.0,634.3 1353.0,650.4 1360.0,647.8 1367.0,654.3 1374.0,658.2 1381.3,665.2 1388.3,654.3 1395.4,668.6 1402.4,677.7 1409.7,681.6 1416.7,684.7 1423.7,654.3 1430.7,675.1 1437.7,653.0 1444.7,640.0 1452.0,662.1 1459.0,647.8 1466.1,648.3 1473.1,655.6 1480.1,656.1 1487.1,647.8 1496.3,660.8 1503.3,685.5 1510.3,636.1 1517.6,632.2 1524.6,634.3 1531.6,640.0 1538.6,640.0 1545.7,656.1 1552.7,654.3 1559.7,655.6 1567.0,649.1 1574.0,658.2 1581.0,671.7 1588.0,664.2 1595.0,671.7"/><path d="M1466.8 577.2v12.6l2.9-2.7 2.2 5 1.9-.8-2.2-4.9h4z" fill="#fff" stroke="#000" stroke-width=".7"/></svg>
<span class="t" style="left:328.00px;top:553.00px;font-size:13.00px;color:#e8e8e8;transform:scaleX(1.0287);">3&quot;</span>
<span class="t" style="left:328.00px;top:581.70px;font-size:13.00px;color:#e8e8e8;transform:scaleX(1.0287);">2&quot;</span>
<span class="t" style="left:328.00px;top:610.50px;font-size:13.00px;color:#e8e8e8;transform:scaleX(1.0287);">1&quot;</span>
<span class="t" style="left:325.80px;top:668.10px;font-size:13.00px;color:#e8e8e8;transform:scaleX(0.9019);">-1&quot;</span>
<span class="t" style="left:325.80px;top:696.90px;font-size:13.00px;color:#e8e8e8;transform:scaleX(0.9019);">-2&quot;</span>
<span class="t" style="left:325.80px;top:725.70px;font-size:13.00px;color:#e8e8e8;transform:scaleX(0.9019);">-3&quot;</span>
<span class="t" style="left:1448.20px;top:549.89px;font-size:13.60px;color:#d8d8d8;transform:scaleX(1.0661);">Dithering</span>
<span class="t" style="left:1657.80px;top:545.25px;font-size:11.40px;color:#b8141c;transform:scaleX(1.0716);">Guidage Nord</span>
<span class="t" style="left:1666.80px;top:746.55px;font-size:11.40px;color:#4343c4;transform:scaleX(1.0688);">Guidage Est</span>
<!-- guide algorithm controls -->
<span class="t" style="left:335.40px;top:779.58px;font-size:14.20px;color:#f2f2f2;transform:scaleX(0.9702);"><b>AD :</b> Agr</span>
<div style="left:393.90px;top:774.20px;width:36.90px;height:26.70px;background:#ffffff;box-shadow:inset 0 0 0 1px #dedede;"></div>
<span class="t" style="left:409.22px;top:779.58px;font-size:14.20px;color:#2a2a2a;transform-origin:100% 50%;transform:scaleX(0.9251);">70</span>
<div style="left:432.00px;top:774.20px;width:20.00px;height:26.70px;background:#ebebeb;box-shadow:inset 0 0 0 1px #c4c4c4, inset 0 0 0 2px #f6f6f6;"></div>
<div style="left:433.00px;top:787.00px;width:18.00px;height:1.20px;background:#b9b9b9;"></div>
<svg style="left:438.2px;top:778.6px" width="7" height="18" viewBox="0 0 7 18"><path d="M0.3 4.4L3.5 0.8 6.7 4.4zM0.3 13.6L3.5 17.2 6.7 13.6z" fill="#1a1a1a"/></svg>
<span class="t" style="left:463.80px;top:779.58px;font-size:14.20px;color:#f2f2f2;transform:scaleX(0.8921);">Hys</span>
<div style="left:492.20px;top:774.20px;width:36.90px;height:26.70px;background:#ffffff;box-shadow:inset 0 0 0 1px #dedede;"></div>
<span class="t" style="left:507.52px;top:779.58px;font-size:14.20px;color:#2a2a2a;transform-origin:100% 50%;transform:scaleX(0.9251);">10</span>
<div style="left:530.40px;top:774.20px;width:20.00px;height:26.70px;background:#ebebeb;box-shadow:inset 0 0 0 1px #c4c4c4, inset 0 0 0 2px #f6f6f6;"></div>
<div style="left:531.40px;top:787.00px;width:18.00px;height:1.20px;background:#b9b9b9;"></div>
<svg style="left:536.6px;top:778.6px" width="7" height="18" viewBox="0 0 7 18"><path d="M0.3 4.4L3.5 0.8 6.7 4.4zM0.3 13.6L3.5 17.2 6.7 13.6z" fill="#1a1a1a"/></svg>
<span class="t" style="left:562.30px;top:779.58px;font-size:14.20px;color:#f2f2f2;transform:scaleX(1.0197);">MnMo</span>
<div style="left:608.30px;top:774.20px;width:46.10px;height:26.70px;background:#ffffff;box-shadow:inset 0 0 0 1px #dedede;"></div>
<span class="t" style="left:615.00px;top:779.58px;font-size:14.20px;color:#2a2a2a;transform:scaleX(0.9195);">0.32</span>
<div style="left:655.60px;top:774.20px;width:20.00px;height:26.70px;background:#ebebeb;box-shadow:inset 0 0 0 1px #c4c4c4, inset 0 0 0 2px #f6f6f6;"></div>
<div style="left:656.60px;top:787.00px;width:18.00px;height:1.20px;background:#b9b9b9;"></div>
<svg style="left:661.8px;top:778.6px" width="7" height="18" viewBox="0 0 7 18"><path d="M0.3 4.4L3.5 0.8 6.7 4.4zM0.3 13.6L3.5 17.2 6.7 13.6z" fill="#1a1a1a"/></svg>
<span class="t" style="left:688.20px;top:779.58px;font-size:14.20px;color:#f2f2f2;transform:scaleX(0.9174);"><b>DEC :</b> Agr</span>
<div style="left:752.60px;top:774.20px;width:36.10px;height:26.70px;background:#ffffff;box-shadow:inset 0 0 0 1px #dedede;"></div>
<span class="t" style="left:759.23px;top:779.58px;font-size:14.20px;color:#2a2a2a;transform-origin:100% 50%;transform:scaleX(0.9294);">100</span>
<div style="left:790.80px;top:774.20px;width:20.00px;height:26.70px;background:#ebebeb;box-shadow:inset 0 0 0 1px #c4c4c4, inset 0 0 0 2px #f6f6f6;"></div>
<div style="left:791.80px;top:787.00px;width:18.00px;height:1.20px;background:#b9b9b9;"></div>
<svg style="left:797.0px;top:778.6px" width="7" height="18" viewBox="0 0 7 18"><path d="M0.3 4.4L3.5 0.8 6.7 4.4zM0.3 13.6L3.5 17.2 6.7 13.6z" fill="#1a1a1a"/></svg>
<span class="t" style="left:822.70px;top:779.58px;font-size:14.20px;color:#f2f2f2;transform:scaleX(1.0197);">MnMo</span>
<div style="left:868.80px;top:774.20px;width:46.30px;height:26.70px;background:#ffffff;box-shadow:inset 0 0 0 1px #dedede;"></div>
<span class="t" style="left:875.50px;top:779.58px;font-size:14.20px;color:#2a2a2a;transform:scaleX(0.9195);">0.32</span>
<div style="left:916.70px;top:774.20px;width:20.00px;height:26.70px;background:#ebebeb;box-shadow:inset 0 0 0 1px #c4c4c4, inset 0 0 0 2px #f6f6f6;"></div>
<div style="left:917.70px;top:787.00px;width:18.00px;height:1.20px;background:#b9b9b9;"></div>
<svg style="left:922.9px;top:778.6px" width="7" height="18" viewBox="0 0 7 18"><path d="M0.3 4.4L3.5 0.8 6.7 4.4zM0.3 13.6L3.5 17.2 6.7 13.6z" fill="#1a1a1a"/></svg>
<span class="t" style="left:947.90px;top:779.58px;font-size:14.20px;color:#f2f2f2;transform:scaleX(0.9383);"><b>Scope :</b> Mx AD</span>
<div style="left:1045.10px;top:774.20px;width:43.10px;height:26.70px;background:#ffffff;box-shadow:inset 0 0 0 1px #dedede;"></div>
<span class="t" style="left:1051.80px;top:779.58px;font-size:14.20px;color:#2a2a2a;transform:scaleX(0.8364);">2500</span>
<div style="left:1090.20px;top:774.20px;width:20.00px;height:26.70px;background:#ebebeb;box-shadow:inset 0 0 0 1px #c4c4c4, inset 0 0 0 2px #f6f6f6;"></div>
<div style="left:1091.20px;top:787.00px;width:18.00px;height:1.20px;background:#b9b9b9;"></div>
<svg style="left:1096.4px;top:778.6px" width="7" height="18" viewBox="0 0 7 18"><path d="M0.3 4.4L3.5 0.8 6.7 4.4zM0.3 13.6L3.5 17.2 6.7 13.6z" fill="#1a1a1a"/></svg>
<span class="t" style="left:1121.60px;top:779.58px;font-size:14.20px;color:#f2f2f2;transform:scaleX(0.9013);">Mx DEC</span>
<div style="left:1175.40px;top:774.20px;width:43.10px;height:26.70px;background:#ffffff;box-shadow:inset 0 0 0 1px #dedede;"></div>
<span class="t" style="left:1182.10px;top:779.58px;font-size:14.20px;color:#2a2a2a;transform:scaleX(0.8364);">2500</span>
<div style="left:1220.40px;top:774.20px;width:20.00px;height:26.70px;background:#ebebeb;box-shadow:inset 0 0 0 1px #c4c4c4, inset 0 0 0 2px #f6f6f6;"></div>
<div style="left:1221.40px;top:787.00px;width:18.00px;height:1.20px;background:#b9b9b9;"></div>
<svg style="left:1226.6px;top:778.6px" width="7" height="18" viewBox="0 0 7 18"><path d="M0.3 4.4L3.5 0.8 6.7 4.4zM0.3 13.6L3.5 17.2 6.7 13.6z" fill="#1a1a1a"/></svg>
<div style="left:1251.20px;top:774.40px;width:63.40px;height:26.50px;background:#e2e2e2;box-shadow:inset 0 0 0 1px #adadad;"></div>
<span class="t" style="left:1256.40px;top:781.18px;font-size:14.20px;color:#1e1e1e;transform:scaleX(1.0141);">Auto</span>
<svg style="left:1299px;top:784px" width="10" height="7" viewBox="0 0 10 7"><path d="M0.8 1l4.2 4.4L9.2 1" fill="none" stroke="#333" stroke-width="1.2"/></svg>
<!-- main toolbar -->
<div style="left:169.00px;top:814.90px;width:730.40px;height:50.00px;background:#646464;"></div>
<div style="left:170.30px;top:814.90px;width:728.00px;height:1.20px;background:#2c2c2c;"></div>
<div style="left:170.30px;top:814.90px;width:1.20px;height:48.00px;background:#333;"></div>
<div style="left:896.60px;top:814.90px;width:1.20px;height:48.00px;background:#333;"></div>
<div style="left:170.30px;top:861.90px;width:727.40px;height:1.20px;background:#262626;"></div>
<div style="left:169.00px;top:863.00px;width:730.40px;height:1.90px;background:#808080;"></div>
<div style="left:169.00px;top:812.90px;width:1.35px;height:51.90px;background:#efefef;"></div>
<div style="left:897.80px;top:814.90px;width:1.70px;height:50.00px;background:#b4b4b4;"></div>
<svg style="left:174.8px;top:823.6px" width="3" height="31" viewBox="0 0 3 31"><path d="M1.5 0v31" stroke="#f0f0f0" stroke-width="2" stroke-dasharray="1.9 1.9"/></svg>
<svg style="left:187.5px;top:820.3px" width="36.6" height="37.9" viewBox="125 130 575 590" preserveAspectRatio="none"><rect x="132" y="138" width="561" height="574" rx="46" fill="#e6e6e6" stroke="#3a3a3a" stroke-width="24"/><path d="M196 598L290 520 322 556 222 640z" fill="#9e9e9e" stroke="#2c2c2c" stroke-width="13" stroke-linejoin="round"/><path d="M286 506L292 470 345 352 436 272 562 396 470 482 352 544 318 548z" fill="#a9a9a9" stroke="#2c2c2c" stroke-width="13" stroke-linejoin="round"/><path d="M436 272L546 190 646 290 562 396z" fill="#f4f4f4" stroke="#2c2c2c" stroke-width="13" stroke-linejoin="round"/><path d="M470 300L578 218M505 334L612 254" stroke="#2c2c2c" stroke-width="10"/></svg>
<svg style="left:233.6px;top:820.3px" width="36.6" height="37.9" viewBox="850 130 575 590" preserveAspectRatio="none"><rect x="857" y="138" width="561" height="574" rx="46" fill="#c9f9d8" stroke="#33463a" stroke-width="24"/><g fill="none" stroke="#00984d" stroke-width="54"><path d="M1297 506 A174 174 0 0 0 1128 251"/><path d="M989 343 A174 174 0 0 0 1158 598"/></g><path d="M1044 260L1132 174 1132 347z" fill="#00984d"/><path d="M1230 589L1147 502 1147 675z" fill="#00984d"/></svg>
<svg style="left:275px;top:812px" width="150" height="56" viewBox="0 0 1917 716" preserveAspectRatio="none"><defs><radialGradient id="xh"><stop offset="0" stop-color="#8a8a8a"/><stop offset="1" stop-color="#5a5a5a"/></radialGradient><linearGradient id="stp" x1="0" y1="1" x2="1" y2="0"><stop offset="0" stop-color="#c81e1e"/><stop offset="1" stop-color="#f4502a"/></linearGradient></defs><path d="M268 125h28l14 165 182 0-118 100 50 150-142-98-138 98 58-150-128-100 176 0z" fill="#dadada"/><path d="M392 424L524 552" stroke="#1e1e1e" stroke-width="30" stroke-linecap="round"/><path d="M398 430L520 548" stroke="#9c9c9c" stroke-width="9"/><circle cx="335" cy="365" r="74" fill="#8c8c8c" stroke="#1e1e1e" stroke-width="16"/><circle cx="315" cy="345" r="30" fill="#b4b4b4" opacity=".7"/><circle cx="885" cy="340" r="226" fill="url(#xh)" stroke="#1c1c1c" stroke-width="17"/><path d="M885 114v452M659 340h452" stroke="#1c1c1c" stroke-width="13"/><circle cx="885" cy="340" r="46" fill="none" stroke="#1c1c1c" stroke-width="13"/><path d="M1384 120h188l132 132v188l-132 132h-188l-132-132v-188z" fill="url(#stp)" stroke="#ffd6cc" stroke-width="15" stroke-linejoin="round"/></svg>
<span class="t" style="left:375.60px;top:829.93px;font-size:20.40px;color:#fffaf4;font-weight:700;transform:scaleX(0.5439);">STOP</span>
<div style="left:417.90px;top:823.00px;width:1.70px;height:32.00px;background:#9c9c9c;"></div>
<div style="left:424.90px;top:825.30px;width:177.80px;height:26.20px;background:#e1e1e1;box-shadow:inset 0 0 0 1px #adadad;"></div>
<span class="t" style="left:430.30px;top:831.38px;font-size:14.20px;color:#1e1e1e;transform:scaleX(0.8386);">1.0 s</span>
<svg style="left:587.4px;top:835.4px" width="10.4" height="7" viewBox="0 0 10.4 7"><path d="M0.7 0.9l4.5 4.7L9.7 0.9" fill="none" stroke="#333" stroke-width="1.25"/></svg>
<div style="left:605.30px;top:825.30px;width:184.20px;height:27.20px;background:#3c3c3c;"></div>
<div style="left:614.00px;top:834.60px;width:167.00px;height:4.40px;background:#f4f4f4;"></div>
<svg style="left:631.6px;top:827.2px" width="13" height="22" viewBox="0 0 13 22"><path d="M0.3 0.3h12.4v16.2L6.5 21.8 0.3 16.5z" fill="#0a79d8"/></svg>
<div style="left:795.30px;top:823.00px;width:1.70px;height:32.00px;background:#9c9c9c;"></div>
<svg style="left:795px;top:815px" width="110" height="51" viewBox="0 0 1909 885" preserveAspectRatio="none"><defs><radialGradient id="br" cx=".45" cy=".35" r=".75"><stop offset="0" stop-color="#fde6e0"/><stop offset=".55" stop-color="#f4b9b0"/><stop offset="1" stop-color="#dd7f74"/></radialGradient><linearGradient id="cam" x1="0" y1="0" x2="1" y2="1"><stop offset="0" stop-color="#018a46"/><stop offset=".5" stop-color="#0f9a4a"/><stop offset="1" stop-color="#3fbf4a"/></linearGradient></defs><path d="M228 340C218 250 330 172 480 165 640 150 800 230 826 370 838 460 790 530 702 572L660 612 604 686 532 612C516 560 482 494 420 492 330 502 240 440 228 340z" fill="url(#br)" stroke="#5e2624" stroke-width="16" stroke-linejoin="round"/><path d="M300 300q40-50 90-10t90-20 100 10 80 30M280 380q60-30 110 10t100-10 110 30M470 470q60-20 110 30t100 10M330 240q50-30 100 0M560 210q60-10 110 40M690 330q50 30 60 90" fill="none" stroke="#e89a90" stroke-width="14" stroke-linecap="round"/><path d="M540 600l60 70 50-50" fill="#c86a62" stroke="none"/><path d="M1040 290q0-22 22-22h108l70-70h150l62 70h116q22 0 22 22v322q0 22-22 22h-506q-22 0-22-22z" fill="url(#cam)" stroke="#00612e" stroke-width="16" stroke-linejoin="round"/><path d="M1092 612L1268 432C1236 372 1290 318 1352 336L1316 384 1352 426 1408 410C1428 470 1380 520 1318 500L1212 612z" fill="#e6e6de" stroke="#0a5e2c" stroke-width="13" stroke-linejoin="round"/></svg>
<!-- status bar -->
<div style="left:170.00px;top:866.30px;width:1575.20px;height:1.80px;background:#e8e8e8;"></div>
<span class="t" style="left:173.20px;top:872.18px;font-size:14.20px;color:#f4f4f4;transform:scaleX(0.9359);">Guidage</span>
<div style="left:1211.40px;top:868.00px;width:1.20px;height:17.00px;background:#a8a8a8;"></div>
<div style="left:1247.20px;top:868.00px;width:1.20px;height:17.00px;background:#a8a8a8;"></div>
<div style="left:1326.80px;top:868.00px;width:1.20px;height:17.00px;background:#a8a8a8;"></div>
<div style="left:1466.20px;top:868.00px;width:1.20px;height:17.00px;background:#a8a8a8;"></div>
<div style="left:1606.00px;top:868.00px;width:1.20px;height:17.00px;background:#a8a8a8;"></div>
<div style="left:1659.50px;top:868.00px;width:1.20px;height:17.00px;background:#a8a8a8;"></div>
<div style="left:1704.00px;top:868.00px;width:1.20px;height:17.00px;background:#a8a8a8;"></div>
<div style="left:1744.00px;top:868.00px;width:1.20px;height:17.00px;background:#a8a8a8;"></div>
<span class="t" style="left:1216.80px;top:872.18px;font-size:14.20px;color:#f2f2f2;transform:scaleX(0.9267);">9/12</span>
<span class="t" style="left:1255.80px;top:872.18px;font-size:14.20px;color:#f2f2f2;transform:scaleX(0.7473);">RSB</span>
<span class="t" style="left:1285.20px;top:872.18px;font-size:14.20px;color:#38d838;transform:scaleX(0.8672);">616.2</span>
<svg style="left:1330.6px;top:872.4px" width="18" height="12" viewBox="0 0 18 12"><path d="M0.5 4.2h9.6V0.4L17.6 6l-7.5 5.6V7.8H0.5z" fill="#fff"/></svg>
<span class="t" style="left:1362.80px;top:872.18px;font-size:14.20px;color:#d0d0d0;transform:scaleX(0.8994);">14 ms, 0.4 px</span>
<span class="t" style="left:1488.00px;top:872.18px;font-size:14.20px;color:#8c8c8c;transform:scaleX(0.8994);">48 ms, 0.7 px</span>
<span class="t" style="left:1617.00px;top:872.69px;font-size:13.60px;color:#7a1010;transform:scaleX(0.9407);">Dark</span>
<span class="t" style="left:1669.00px;top:872.69px;font-size:13.60px;color:#0f6a1a;transform:scaleX(0.9801);">Cal</span>
<svg style="left:1716px;top:870px" width="22" height="15" viewBox="0 0 22 15"><circle cx="11" cy="10.5" r="9" fill="#16a030"/><circle cx="8" cy="8" r="4" fill="#3ad050" opacity=".7"/></svg>
<span class="t" style="left:1544.00px;top:863.90px;font-size:17.60px;color:#ffffff;font-weight:700;font-family:'Liberation Mono', 'DejaVu Sans Mono', monospace;transform:scaleX(0.8903);text-shadow:0 0 2px #000,0 0 1px #000;">2025-12-05 22:10:23</span>
</div>
</body></html>
